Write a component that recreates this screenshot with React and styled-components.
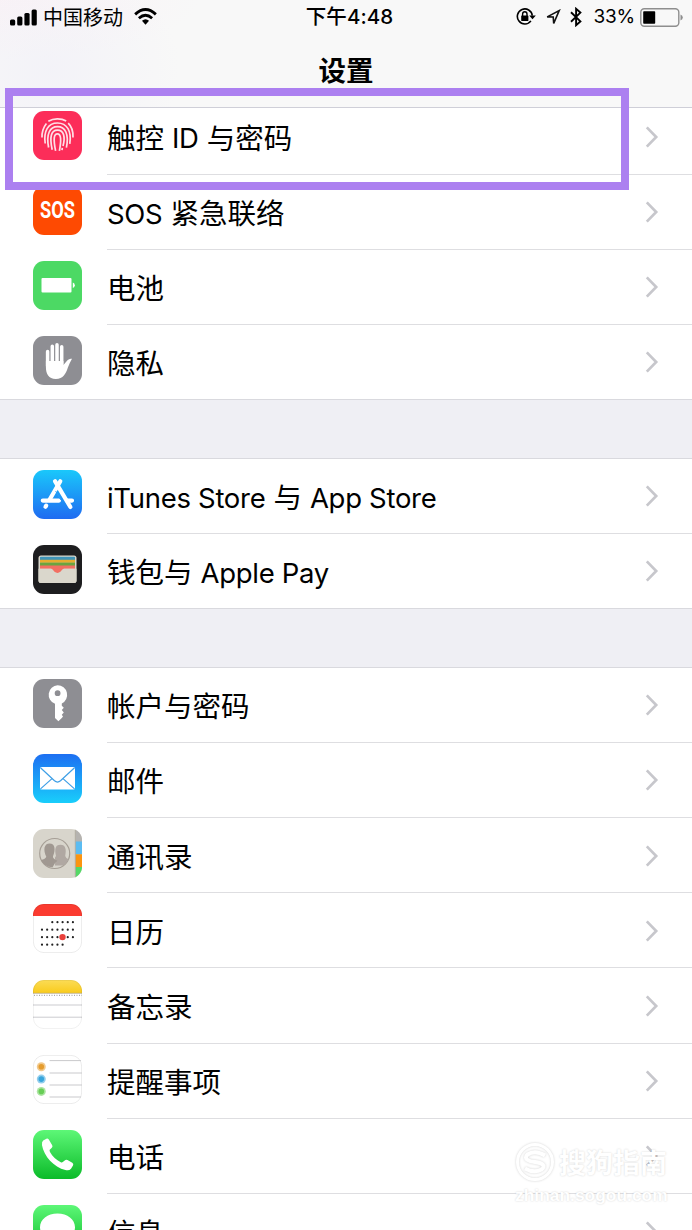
import React from 'react'
import styled, { createGlobalStyle } from 'styled-components'

const GlobalStyle = createGlobalStyle`
* {
    box-sizing: border-box;
}

body {
    margin: 0;
    background: #efeff4;
    color: #000;
    font-family: Inter, 'Noto Sans CJK SC', sans-serif;
}
`;


const Screen = styled.div`
position: relative;
width: 692px;
height: 1230px;
overflow: hidden;
background: #efeff4;
`;


const Header = styled.header`
position: relative;
z-index: 1;
height: 108px;
border-bottom: 1px solid #cfcfd8;
background:
    radial-gradient(ellipse 130px 110px at 50px 70px, rgba(240,239,248,0.6), rgba(248,248,248,0)),
    radial-gradient(ellipse 200px 60px at 0 0, rgba(250,240,245,0.7), rgba(248,248,248,0)),
    #f8f8f8;
`;


const StatusBar = styled.div`
display: grid;
grid-template-columns: 1fr auto 1fr;
align-items: center;
height: 34px;
padding: 0 9px 0 10px;
font-size: 20px;
line-height: 34px;
`;


const StatusSide = styled.div`
display: flex;
align-items: center;
justify-content: ${({ $end }) => ($end ? 'flex-end' : 'flex-start')};
height: 34px;

svg {
    display: block;
    flex: none;
}
`;


const Carrier = styled.span`
margin: 0 11px 0 6px;
padding-top: 1px;
`;


const Clock = styled.span`
padding-left: 6px;
font-size: 20.5px;
font-weight: 500;
letter-spacing: 0.1px;
`;


const Indicators = styled.div`
display: flex;
align-items: center;
gap: 9px;
`;


const Percent = styled.span`
margin: 0 5px 0 11px;
font-size: 19px;
letter-spacing: -0.2px;
`;


const Title = styled.h1`
margin: 0;
padding-top: 1px;
font-size: 27.5px;
font-weight: 600;
line-height: 72px;
text-align: center;
`;


const Settings = styled.main`
display: flex;
flex-direction: column;
gap: 58.6px;
margin-top: -8.7px;
`;


const Group = styled.ul`
margin: 0;
padding: 0;
list-style: none;
background: #fff;
box-shadow: 0 -1px 0 #d9d9de;
`;


const Row = styled.li`
display: flex;
height: 75.2px;
padding-left: 33px;

&:last-child {
    box-shadow: inset 0 -1px 0 #d9d9de;
}
`;


const RowIcon = styled.svg`
flex: none;
width: 49px;
height: 49px;
margin-top: 11.2px;
`;


const RowBody = styled.div`
display: flex;
flex: 1;
align-items: center;
justify-content: space-between;
margin-left: 25px;
padding: 1px 33px 0 0;
border-bottom: 1px solid #dedee1;

${Row}:last-child & {
    border-bottom-color: transparent;
}
`;


const Label = styled.span`
font-size: 28.5px;
line-height: 40px;
padding-top: 4px;
white-space: nowrap;
`;


const Latin = styled.span`
position: relative;
top: -0.5px;
font-size: 27.5px;
letter-spacing: -0.3px;
`;


const Highlight = styled.div`
position: absolute;
z-index: 2;
left: 5px;
top: 88px;
width: 624px;
height: 102px;
border: 8px solid #ac80f0;
`;


const Watermark = styled.div`
position: absolute;
z-index: 2;
left: 515px;
top: 1140px;
width: 156px;
color: #fff;
text-shadow: 0 0 2px rgba(0,0,0,0.18);
`;


const WatermarkBrand = styled.div`
display: flex;
align-items: center;
gap: 4px;
height: 43px;
font-size: 27px;
font-weight: 700;
white-space: nowrap;

svg {
    flex: none;
    filter: drop-shadow(0 0 1px rgba(0,0,0,0.18));
}
`;


const WatermarkUrl = styled.div`
font-family: 'Liberation Sans', Arial, sans-serif;
font-size: 17.4px;
font-weight: 700;
line-height: 24px;
`;


const SignalIcon = () => (
    <svg width="27" height="17" viewBox="0 0 27 17">
        <rect x="0" y="10.5" width="5.2" height="6" rx="1.5" />
        <rect x="7.2" y="7.5" width="5.2" height="9" rx="1.5" />
        <rect x="14.4" y="4" width="5.2" height="12.5" rx="1.5" />
        <rect x="21.6" y="0.5" width="5.2" height="16" rx="1.5" />
    </svg>
)

const WifiIcon = () => (
    <svg width="23" height="18" viewBox="0 0 24 18" fill="none" stroke="#000">
        <path d="M1.2 6.2Q12 -3.6 22.8 6.2" strokeWidth="3" />
        <path d="M5.1 10.4Q12 4 18.9 10.4" strokeWidth="2.8" />
        <path d="M8.3 13Q12 9.6 15.7 13L12 17Z" fill="#000" stroke="none" />
    </svg>
)

const LockIcon = () => (
    <svg width="20" height="18" viewBox="0 0 20 18" fill="none" stroke="#000" strokeWidth="1.6">
        <path d="M14.9 12.9A7.5 7.5 0 1 1 16.3 7.6" />
        <path d="M13.2 7.6H19.8L16.5 11.2Z" fill="#000" stroke="none" />
        <rect x="5.2" y="7.6" width="7.2" height="5.4" rx="0.4" fill="#000" stroke="none" />
        <path d="M6.6 8V6a2.2 2.2 0 0 1 4.4 0V8" strokeWidth="1.4" />
    </svg>
)

const LocationIcon = () => (
    <svg width="16" height="17" viewBox="0 0 16 17" fill="none" stroke="#111" strokeWidth="1.6">
        <path d="M2.2 7.9L14.2 1.6L8.7 14.4L8.2 8Z" />
    </svg>
)

const BluetoothIcon = () => (
    <svg width="12" height="20" viewBox="0 0 12 20" fill="none" stroke="#000" strokeWidth="1.9">
        <path d="M1 5.2L10.4 14.4L6.1 18.2V1.8L10.4 5.6L1 14.8" />
    </svg>
)

const BatteryIcon = () => (
    <svg width="43" height="19" viewBox="0 0 43 19">
        <rect x="0.8" y="0.8" width="38" height="17.4" rx="3.5" fill="none" stroke="#8e8e8e" strokeWidth="1.4" />
        <rect x="3.2" y="3.2" width="12" height="12.6" rx="0.8" />
        <path d="M40.5 6.5q2.3 1 2.3 3t-2.3 3z" fill="#8e8e8e" />
    </svg>
)

const Chevron = () => (
    <svg width="14" height="24" viewBox="0 0 14 24" fill="none" stroke="#c7c7cc" strokeWidth="2.7">
        <path d="M1.8 2.4L11.2 12L1.8 21.6" />
    </svg>
)

const Tile = ({ fill }) => <rect width="49" height="49" rx="11" fill={fill} />

const Gradient = ({ id, from, to }) => (
    <linearGradient id={id} x1="0" y1="0" x2="0" y2="1">
        <stop offset="0" stopColor={from} />
        <stop offset="1" stopColor={to} />
    </linearGradient>
)

const TileClip = ({ id }) => (
    <clipPath id={id}>
        <rect width="49" height="49" rx="11" />
    </clipPath>
)

const TouchIdIcon = () => (
    <RowIcon viewBox="0 0 49 49">
        <Tile fill="#fc2d59" />
        <g fill="none" stroke="#fff" strokeOpacity="0.85" strokeWidth="1.7">
            <path d="M15.3 10.2C20.6 7.2 28 7 33.2 10" />
            <path d="M9 26.5C8.8 21.5 10 17 13.4 12.6" />
            <path d="M35.2 12.2C38.8 15.6 40.3 20 40 26.5" />
            <path d="M12.2 32.5C10.4 20 15 12 24.5 12C34 12 38.8 20 36.8 32.8" />
            <path d="M15.6 36.5C13 23 16.8 15.6 24.5 15.6C32.2 15.6 36.2 23 33.4 36.6" />
            <path d="M19.2 38.8C16.4 26 18 19.2 24.5 19.2C31 19.2 32.4 26 30 35" />
            <path d="M22.6 39.8C20.2 28 20.8 22.8 24.4 22.8C28.2 22.8 28.4 29 26.4 39.8" />
            <path d="M29.3 36.8L29 39.2" />
        </g>
    </RowIcon>
)

const SosIcon = () => (
    <RowIcon viewBox="0 0 49 49">
        <Tile fill="#fe4a02" />
        <text x="24.5" y="32.2" fill="#fff" textAnchor="middle" textLength="35" lengthAdjust="spacingAndGlyphs" fontFamily="Roboto, sans-serif" fontSize="23" fontWeight="700">SOS</text>
    </RowIcon>
)

const PowerIcon = () => (
    <RowIcon viewBox="0 0 49 49">
        <Tile fill="#4cd964" />
        <rect x="8.5" y="17" width="30" height="14.5" rx="1" fill="#fff" />
        <path d="M39.8 21.5q2 .6 2 2.8t-2 2.8z" fill="#fff" />
    </RowIcon>
)

const PrivacyIcon = () => (
    <RowIcon viewBox="0 0 49 49">
        <Tile fill="#8e8e93" />
        <g fill="none" stroke="#fff" strokeWidth="3.5" strokeLinecap="round">
            <path d="M14.6 15.6V30M19.3 10.2V28M24 8.7V28M28.7 10.8V28" />
        </g>
        <path d="M12.9 25H30.4V29L34.5 24.2Q36.4 22.2 39 22.8Q36.6 27 34.8 31.7C32.8 37.5 30.4 43 22.8 43C15.6 43 12.9 37.8 12.9 31Z" fill="#fff" />
    </RowIcon>
)

const StoreIcon = () => (
    <RowIcon viewBox="0 0 49 49">
        <defs><Gradient id="store" from="#1ac8fb" to="#1f6bf1" /></defs>
        <Tile fill="url(#store)" />
        <g fill="none" stroke="#fff" strokeWidth="4.2" strokeLinecap="round">
            <path d="M27.3 11.2L16.4 30M13.2 35.6L12.5 36.8" />
            <path d="M9.8 30.6H26M34 30.6H39" />
            <path d="M22 11.2L37.4 37" />
        </g>
        <path d="M22.7 21.2L28 30.2" stroke="#2b9cf8" strokeWidth="1" />
    </RowIcon>
)

const WalletIcon = () => (
    <RowIcon viewBox="0 0 49 49">
        <Tile fill="#1d1d1f" />
        <rect x="5.5" y="10.5" width="38" height="27.5" rx="2.5" fill="#dad7cc" />
        <path d="M7 12.5q0-.8.8-.8H41.2q.8 0 .8.8V16H7z" fill="#3f94b8" />
        <rect x="7" y="14.8" width="35" height="3" fill="#e7ad2f" />
        <rect x="7" y="17.6" width="35" height="3.5" fill="#6aa540" />
        <path d="M7 20.6H42V23.8H31C28.8 23.8 28.8 28 24.5 28S20.2 23.8 18 23.8H7Z" fill="#f26f62" />
        <path d="M5.5 23.8H18C20.2 23.8 20.2 28 24.5 28S28.8 23.8 31 23.8H43.5V35.5a2.5 2.5 0 0 1-2.5 2.5H8a2.5 2.5 0 0 1-2.5-2.5Z" fill="#dad7cc" />
    </RowIcon>
)

const KeyIcon = () => (
    <RowIcon viewBox="0 0 49 49">
        <Tile fill="#8e8e93" />
        <path fillRule="evenodd" fill="#fff" d="M24.6 6.2a9.6 9.6 0 0 1 4.2 18.2v2.4l2 2-2 2.3 2 2.3-2 2.4 1.2 1.6-1.2 1.6-3.4 3.2-3.4-3.2V24.8A9.6 9.6 0 0 1 24.6 6.2ZM24.6 11.3a2.9 2.9 0 1 0 0 5.8a2.9 2.9 0 0 0 0-5.8Z" />
    </RowIcon>
)

const MailIcon = () => (
    <RowIcon viewBox="0 0 49 49">
        <defs><Gradient id="mail" from="#1d6ff2" to="#19cefb" /></defs>
        <Tile fill="url(#mail)" />
        <rect x="7" y="13" width="35" height="22.5" rx="1.5" fill="#fff" />
        <g fill="none" stroke="#3e9fe6" strokeWidth="1.2">
            <path d="M7.5 13.7L21.5 26.8Q24.5 29.4 27.5 26.8L41.5 13.7" />
            <path d="M7.5 34.9L19 24.6M41.5 34.9L30 24.6" />
        </g>
    </RowIcon>
)

const ContactsIcon = () => (
    <RowIcon viewBox="0 0 49 49">
        <TileClip id="contacts" />
        <g clipPath="url(#contacts)">
            <rect width="49" height="49" fill="#d8d5cc" />
            <rect x="42" width="7" height="13" fill="#b5b3b0" />
            <rect x="42" y="12.5" width="7" height="13" fill="#5bbcf2" />
            <rect x="42" y="25.3" width="7" height="13" fill="#fb9410" />
            <rect x="42" y="38" width="7" height="11" fill="#54d866" />
            <path d="M42.3 0V49" stroke="#b4b0a4" strokeWidth="1" />
            <circle cx="21.7" cy="24.5" r="15" fill="none" stroke="#a69f96" strokeWidth="1.2" />
            <path d="M22.2 31Q21.2 28.5 23 27C21.6 20.5 22 15.8 27.5 15.8C32.6 15.8 33.6 20.5 32.2 27Q32.8 29.3 35.6 30.2Q33.5 34.8 30.5 36.6H22Z" fill="#b0a8a2" />
            <path d="M7.8 31Q12.6 30 13.3 27.8C10 21 11 14.6 16.6 14.6C22.2 14.6 22.8 21 19.9 27.6Q19.9 30 24.4 31.8Q21.8 33.3 19.6 38.3Q12 38.5 7.8 31Z" fill="#a09891" />
        </g>
    </RowIcon>
)

// dots of each calendar week: first and last column
const weeks = [[2, 6], [0, 6], [0, 6], [0, 4]]

const CalendarIcon = () => (
    <RowIcon viewBox="0 0 49 49">
        <TileClip id="calendar" />
        <g clipPath="url(#calendar)">
            <rect width="49" height="49" fill="#fff" />
            <rect width="49" height="12" fill="#fb3b30" />
            {
                weeks.map(([first, last], week) => (
                    Array.from({ length: last - first + 1 }, (_, i) => (
                        <circle key={`${week}-${i}`} cx={9 + (first + i) * 5.15} cy={18.2 + week * 7.5} r="1.1" fill="#222" />
                    ))
                ))
            }
            <circle cx="29.5" cy="33.1" r="3.2" fill="#e9403b" />
        </g>
        <rect x="0.4" y="0.4" width="48.2" height="48.2" rx="10.6" fill="none" stroke="#000" strokeOpacity="0.1" strokeWidth="0.8" />
    </RowIcon>
)

const NotesIcon = () => (
    <RowIcon viewBox="0 0 49 49">
        <defs><Gradient id="notes" from="#fbdc56" to="#f9cb1c" /></defs>
        <TileClip id="notesTile" />
        <g clipPath="url(#notesTile)">
            <rect width="49" height="49" fill="#fff" />
            <rect width="49" height="13" fill="url(#notes)" />
            <path d="M0 13.3H49" stroke="#b9a777" strokeWidth="0.8" />
            <path d="M1 15.3H49" stroke="#aaa" strokeWidth="1.3" strokeDasharray="1 1.5" />
            <path d="M0 25H49M0 37.2H49" stroke="#cbcbcf" strokeWidth="1" />
        </g>
        <rect x="0.4" y="0.4" width="48.2" height="48.2" rx="10.6" fill="none" stroke="#000" strokeOpacity="0.08" strokeWidth="0.8" />
    </RowIcon>
)

const reminderColors = ['#e59c2d', '#38a5dc', '#68ce56']

const RemindersIcon = () => (
    <RowIcon viewBox="0 0 49 49">
        <rect x="0.4" y="0.4" width="48.2" height="48.2" rx="10.6" fill="#fff" stroke="#000" strokeOpacity="0.1" strokeWidth="0.8" />
        <path d="M16.5 5.6H48M16.5 18H49M16.5 30H49M16.5 42H48" stroke="#c9c9cc" strokeWidth="1" />
        {
            reminderColors.map((color, indx) => (
                <g key={color} fill={color}>
                    <circle cx="8.3" cy={11.8 + indx * 12.3} r="4.5" fillOpacity="0.55" />
                    <circle cx="8.3" cy={11.8 + indx * 12.3} r="2.8" />
                </g>
            ))
        }
    </RowIcon>
)

const PhoneIcon = () => (
    <RowIcon viewBox="0 0 49 49">
        <defs><Gradient id="phone" from="#5df777" to="#0bbb29" /></defs>
        <Tile fill="url(#phone)" />
        <path fill="#fff" d="M10.2 10.6L13.4 8.7Q14.8 8.2 15.8 9.5L19.2 15.2Q20 16.8 18.6 18L16.7 19.8Q16.3 20.6 17 22C19.5 26.6 23.3 30.1 27.8 32.2Q29 32.8 29.8 32L31.7 30.4Q33 29.4 34.5 30.1L39.3 32.8Q40.9 33.8 40 35.4L38 38.7Q36.2 40.9 32.4 40C20.8 37.2 10.9 26.2 9 15.2Q8.6 12 10.2 10.6Z" />
    </RowIcon>
)

const MessagesIcon = () => (
    <RowIcon viewBox="0 0 49 49">
        <defs><Gradient id="messages" from="#5df777" to="#0bbb29" /></defs>
        <Tile fill="url(#messages)" />
        <path fill="#fff" d="M24.5 8.6C34.5 8.6 42 14.6 42 22.3S34.5 36 24.5 36Q22 36 19.6 35.5Q16.8 39.2 12.4 39.6Q14.8 36.8 14.4 33.5C9.8 31 7 27 7 22.3C7 14.6 14.5 8.6 24.5 8.6Z" />
    </RowIcon>
)

const groups = [
    [
        { icon: TouchIdIcon, label: <>触控 <Latin>ID</Latin> 与密码</> },
        { icon: SosIcon, label: <><Latin>SOS</Latin> 紧急联络</> },
        { icon: PowerIcon, label: '电池' },
        { icon: PrivacyIcon, label: '隐私' },
    ],
    [
        { icon: StoreIcon, label: <><Latin>iTunes Store</Latin> 与 <Latin>App Store</Latin></> },
        { icon: WalletIcon, label: <>钱包与 <Latin>Apple Pay</Latin></> },
    ],
    [
        { icon: KeyIcon, label: '帐户与密码' },
        { icon: MailIcon, label: '邮件' },
        { icon: ContactsIcon, label: '通讯录' },
        { icon: CalendarIcon, label: '日历' },
        { icon: NotesIcon, label: '备忘录' },
        { icon: RemindersIcon, label: '提醒事项' },
        { icon: PhoneIcon, label: '电话' },
        { icon: MessagesIcon, label: '信息' },
    ],
]

const App = () => {
  return (
   <Screen>
       <GlobalStyle />
       <Header>
           <StatusBar>
               <StatusSide>
                   <SignalIcon />
                   <Carrier>中国移动</Carrier>
                   <WifiIcon />
               </StatusSide>
               <Clock>下午4:48</Clock>
               <StatusSide $end>
                   <Indicators>
                       <LockIcon />
                       <LocationIcon />
                       <BluetoothIcon />
                   </Indicators>
                   <Percent>33%</Percent>
                   <BatteryIcon />
               </StatusSide>
           </StatusBar>
           <Title>设置</Title>
       </Header>
       <Settings>
           {
               groups.map((rows, indx) => (
                   <Group key={indx}>
                       {
                           rows.map(({ icon: Icon, label }, row) => (
                               <Row key={row}>
                                   <Icon />
                                   <RowBody>
                                       <Label>{label}</Label>
                                       <Chevron />
                                   </RowBody>
                               </Row>
                           ))
                       }
                   </Group>
               ))
           }
       </Settings>
       <Highlight />
       <Watermark>
           <WatermarkBrand>
               <svg width="40" height="40" viewBox="0 0 40 40" fill="none" stroke="#fff" strokeWidth="3">
                   <circle cx="20" cy="20" r="17.5" />
                   <path d="M30 13.5Q20 7.5 12.5 12.5C8 17 14 19.5 20 20C28 21 31 24 26.5 27.5Q19 31.5 10 26.5" strokeWidth="4" />
               </svg>
               搜狗指南
           </WatermarkBrand>
           <WatermarkUrl>zhinan.sogou.com</WatermarkUrl>
       </Watermark>
   </Screen>
  )
}

export default App
